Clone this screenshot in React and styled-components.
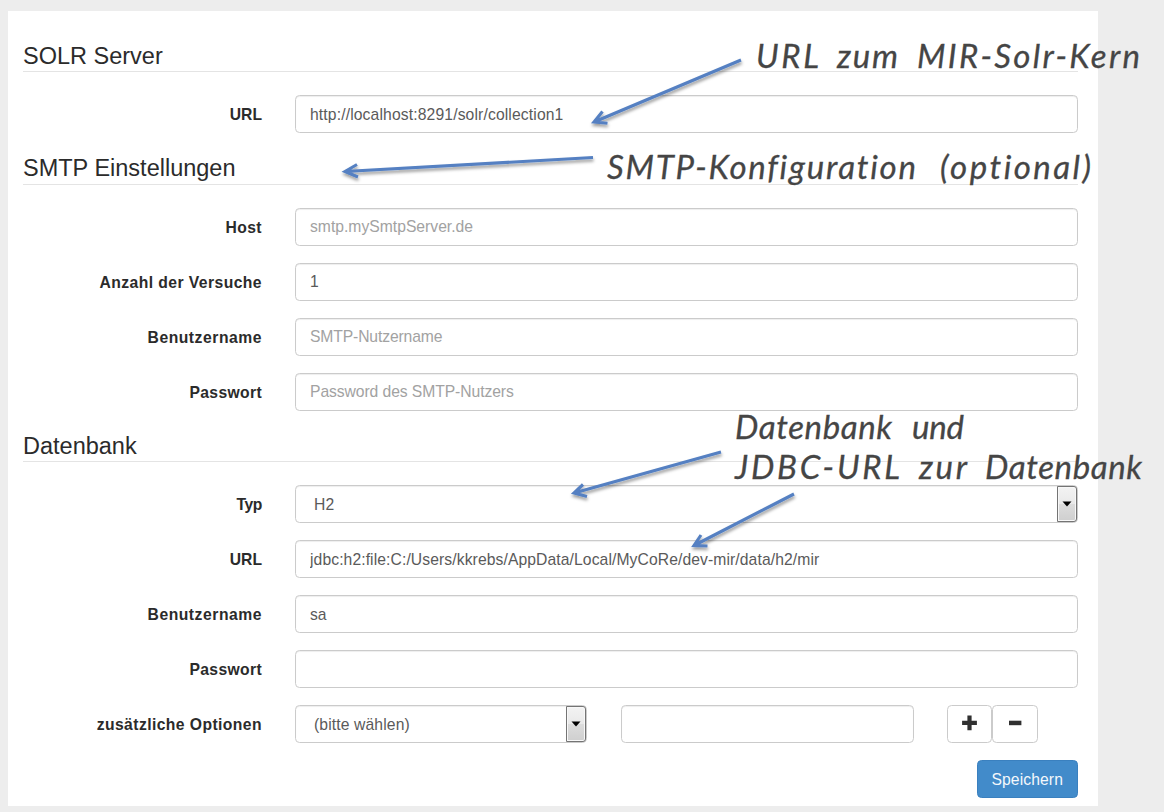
import React from "react";
import styled, { createGlobalStyle } from "styled-components";

const GlobalStyle = createGlobalStyle`
  * { box-sizing: border-box; }
  html, body { margin: 0; height: 812px; overflow: hidden; }
  body {
    background: #ededed;
    color: #2b2b2b;
    font-family: "Liberation Sans", Arial, sans-serif;
    font-size: 15.7px;
  }
`;

const Page = styled.div`
  position: relative;
  width: 1164px;
  height: 812px;
  padding: 11px 0 0 8px;
`;

const Panel = styled.form`
  width: 1090px;
  height: 795px;
  padding: 25.8px 20px 0 15px;
  background: #fff;
`;

const Section = styled.section`
  display: flex;
  flex-direction: column;
  gap: 17px;
  margin-bottom: 16px;
`;

const Legend = styled.h2`
  margin: 0 0 6px;
  height: 35.4px;
  border-bottom: 1.4px solid #e4e4e4;
  font-size: 23.5px;
  font-weight: 400;
  line-height: 38px;
`;

const Row = styled.div`
  display: flex;
  height: 38px;
`;

const Label = styled.label`
  width: 239px;
  margin-right: 33px;
  line-height: 39px;
  text-align: right;
  font-weight: 700;
  white-space: nowrap;
  letter-spacing: ${(p) => p.$spacing || 0}px;
`;

const Input = styled.input`
  width: ${(p) => p.$width || 783}px;
  height: 38px;
  padding: 1.8px 14px 0;
  border: 1.4px solid #cbcbcb;
  border-radius: 4.5px;
  background: #fff;
  box-shadow: inset 0 1px 1px rgba(0, 0, 0, 0.07);
  color: #5a5a5a;
  font: inherit;
  letter-spacing: ${(p) => p.$spacing || 0}px;
  outline: none;
  &::placeholder { color: #a2a2a2; opacity: 1; }
`;

const SelectBox = styled.div`
  display: flex;
  justify-content: space-between;
  width: ${(p) => p.$width || 783}px;
  height: 38px;
  padding-left: 18px;
  border: 1px solid #cbcbcb;
  border-radius: 4.5px;
  box-shadow: inset 0 1px 1px rgba(0, 0, 0, 0.07);
  color: #5a5a5a;
  line-height: 37px;
  letter-spacing: 0.12px;
`;

const SelectButton = styled.span`
  display: flex;
  align-items: center;
  justify-content: center;
  width: 20px;
  height: 36px;
  border: 1px solid #747474;
  border-radius: 0 3px 3px 0;
  background: linear-gradient(#f3f3f3, #e9e9e9 49%, #dcdcdc 51%, #cfcfcf);
  box-shadow: inset 0 0 0 1px #f8f8f8;
`;

const Buttons = styled.div`
  display: flex;
  margin-left: 33px;
`;

const IconButton = styled.button`
  display: flex;
  align-items: center;
  justify-content: center;
  width: 45.3px;
  height: 38px;
  padding: 0 0 1px;
  border: 1.2px solid #cbcbcb;
  border-radius: 4.5px;
  background: #fff;
  color: #303030;
`;

const Gap = styled.div`
  width: 34px;
`;

const Footer = styled.div`
  display: flex;
  justify-content: flex-end;
  margin-top: 17px;
`;

const SaveButton = styled.button`
  width: 101.5px;
  height: 38px;
  padding: 2px 0 0;
  border: 1.2px solid #3a80bf;
  border-radius: 4.5px;
  background: #428bca;
  color: #f4f8fc;
  font: inherit;
  letter-spacing: 0.1px;
`;

const Notes = styled.svg`
  position: absolute;
  inset: 0;
  pointer-events: none;
`;

const NoteText = styled.text`
  font-family: Lato, "Noto Sans", sans-serif;
  font-style: italic;
  font-size: 33px;
  font-variant-ligatures: none;
  fill: #454545;
  stroke: #454545;
  stroke-width: 0.3px;
`;

const Caret = () => (
  <svg width="10" height="6" viewBox="0 0 10 6">
    <path d="M0.5 0.5H9.5L5 5.5Z" fill="#000" />
  </svg>
);

const Select = ({ value, width }) => (
  <SelectBox $width={width}>
    <span>{value}</span>
    <SelectButton><Caret /></SelectButton>
  </SelectBox>
);

const Field = ({ label, labelSpacing, value, placeholder, spacing }) => (
  <Row>
    <Label $spacing={labelSpacing}>{label}</Label>
    <Input readOnly value={value || ""} placeholder={placeholder} $spacing={spacing} />
  </Row>
);

const words = [
  ["URL", 756, 67.5, 63],
  ["zum", 837, 67.5, 61],
  ["MIR-Solr-Kern", 917, 67.5, 223],
  ["SMTP-Konfiguration", 607, 178.5, 309],
  ["(optional)", 940, 178.5, 151],
  ["Datenbank", 735, 438.5, 157],
  ["und", 912, 438.5, 52],
  ["JDBC-URL", 735, 478.5, 165],
  ["zur", 919, 478.5, 48],
  ["Datenbank", 985, 478.5, 157],
];

const arrows = [
  "M741 60L594 122M602.5 111.5L594 122L607.5 123.3",
  "M593 157.5L345 171.5M357 164.5L345 171.5L358 177",
  "M721 452L574 493M583 484.5L574 493L587 496.5",
  "M794 494L694 545.5M701 535L694 545.5L707.5 546",
];

export default function App() {
  return (
    <>
      <GlobalStyle />
      <Page>
        <Panel>
          <Section>
            <Legend>SOLR Server</Legend>
            <Field label="URL" value="http://localhost:8291/solr/collection1" spacing={0.13} />
          </Section>
          <Section>
            <Legend>SMTP Einstellungen</Legend>
            <Field label="Host" labelSpacing={0.4} placeholder="smtp.mySmtpServer.de" />
            <Field label="Anzahl der Versuche" labelSpacing={0.43} value="1" />
            <Field label="Benutzername" labelSpacing={0.53} placeholder="SMTP-Nutzername" spacing={-0.13} />
            <Field label="Passwort" labelSpacing={0.35} placeholder="Password des SMTP-Nutzers" spacing={-0.08} />
          </Section>
          <Section>
            <Legend>Datenbank</Legend>
            <Row>
              <Label $spacing={-0.4}>Typ</Label>
              <Select value="H2" />
            </Row>
            <Field
              label="URL"
              value="jdbc:h2:file:C:/Users/kkrebs/AppData/Local/MyCoRe/dev-mir/data/h2/mir"
              spacing={0.09}
            />
            <Field label="Benutzername" labelSpacing={0.53} value="sa" />
            <Field label="Passwort" labelSpacing={0.35} />
            <Row>
              <Label $spacing={0.42}>zusätzliche Optionen</Label>
              <Select value="(bitte wählen)" width={292} />
              <Gap />
              <Input readOnly value="" $width={293} />
              <Buttons>
                <IconButton type="button">
                  <svg width="16" height="16" viewBox="0 0 16 16">
                    <path d="M5.4 0.6H9.6V5.8H14.9V10H9.6V15.2H5.4V10H0.1V5.8H5.4Z" fill="currentColor" />
                  </svg>
                </IconButton>
                <IconButton type="button">
                  <svg width="16" height="16" viewBox="0 0 16 16">
                    <path d="M2 5.7H14.4V10.2H2Z" fill="currentColor" />
                  </svg>
                </IconButton>
              </Buttons>
            </Row>
          </Section>
          <Footer>
            <SaveButton type="button">Speichern</SaveButton>
          </Footer>
        </Panel>
        <Notes width="1164" height="812" viewBox="0 0 1164 812">
          <defs>
            <filter id="shadow" filterUnits="userSpaceOnUse" x="0" y="0" width="1164" height="812">
              <feDropShadow dx="0.5" dy="2.5" stdDeviation="1.5" floodColor="#000" floodOpacity="0.4" />
            </filter>
          </defs>
          <g fill="none" stroke="#5580c2" strokeWidth="3.1" filter="url(#shadow)">
            {arrows.map((d) => <path key={d} d={d} />)}
          </g>
          {words.map(([text, x, y, length]) => (
            <NoteText key={`${x}-${y}`} x={x} y={y} textLength={length} lengthAdjust="spacing">
              {text}
            </NoteText>
          ))}
        </Notes>
      </Page>
    </>
  );
}
